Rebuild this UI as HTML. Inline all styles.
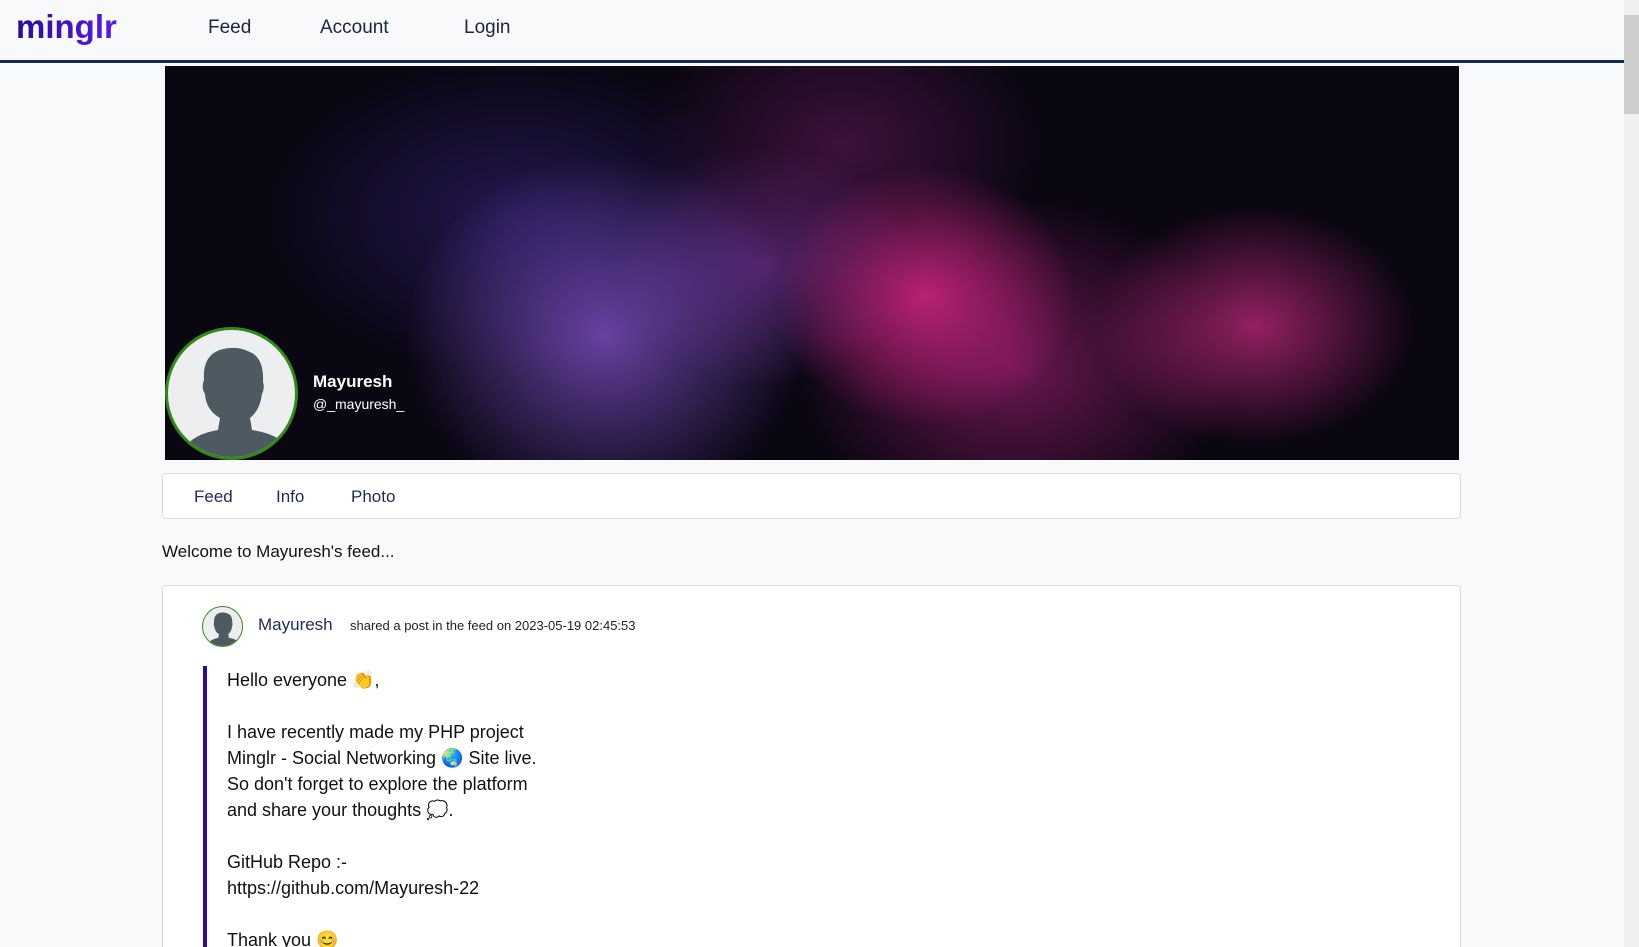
<!DOCTYPE html>
<html style="overflow:hidden;height:947px"><head><meta charset="utf-8"><style>
*{box-sizing:border-box;margin:0;padding:0}
body{width:1639px;height:947px;overflow:hidden;background:#f8f9fb;font-family:"Liberation Sans",sans-serif;color:#111;position:relative}
.nav{position:absolute;left:0;top:0;width:1624px;height:63px;border-bottom:3px solid #16275a;background:#f8f9fb}
.logo{position:absolute;left:16px;top:8px;font-size:33px;font-weight:bold;background:linear-gradient(90deg,#2b0c9a,#5a18f2);-webkit-background-clip:text;color:transparent;letter-spacing:0}
.nav a{position:absolute;top:17px;font-size:19px;color:#1e2340;text-decoration:none}
.sb{position:absolute;right:0;top:0;width:15px;height:947px;background:#f0f0f0}
.sb div{position:absolute;left:0;top:15px;width:15px;height:99px;background:#cdcdcd}
.banner{position:absolute;left:165px;top:66px;width:1294px;height:394px;overflow:hidden;
background:
radial-gradient(ellipse 160px 120px at 1090px 260px,rgba(240,50,150,.6),transparent),
radial-gradient(ellipse 150px 130px at 760px 230px,rgba(230,40,140,.75),transparent),
radial-gradient(ellipse 220px 170px at 850px 300px,rgba(200,40,140,.5),transparent),
radial-gradient(ellipse 200px 180px at 440px 270px,rgba(140,90,220,.7),transparent),
radial-gradient(ellipse 150px 120px at 600px 200px,rgba(140,60,180,.5),transparent),
radial-gradient(ellipse 250px 160px at 350px 150px,rgba(60,40,140,.5),transparent),
radial-gradient(ellipse 200px 150px at 680px 80px,rgba(110,30,100,.5),transparent),
#0a0612}
.av{position:absolute;left:165px;top:327px;width:133px;height:133px;border-radius:50%;border:3px solid #2f8a16;background:#eceef0;overflow:hidden}
.pname{position:absolute;left:313px;top:372px;color:#fff;font-weight:bold;font-size:17px}
.phandle{position:absolute;left:313px;top:396px;color:#fff;font-size:14px}
.tabs{position:absolute;left:162px;top:473px;width:1299px;height:46px;border:1px solid #ddd;border-radius:4px;background:#fff}
.tabs span{position:absolute;top:13px;font-size:17px;color:#1e2a5a}
.welcome{position:absolute;left:162px;top:542px;font-size:17px}
.card{position:absolute;left:162px;top:585px;width:1299px;height:380px;border:1px solid #ddd;border-radius:4px;background:#fff}
.sav{position:absolute;left:202px;top:606px;width:41px;height:41px;border-radius:50%;border:1.5px solid #3a8a1e;background:#eceef0;overflow:hidden}
.post{position:absolute;left:203px;top:666px;width:4px;height:300px;background:#2c0aa0}
.txt{position:absolute;left:227px;top:667px;font-size:18px;line-height:26px;color:#111}
</style></head><body>
<div class="nav"><div class="logo">minglr</div><a style="left:208px">Feed</a><a style="left:320px">Account</a><a style="left:464px">Login</a></div>
<div class="banner"></div>
<div class="av"><svg width="133" height="133" viewBox="0 0 133 133"><path d="M36 50 Q34 20 62 18 Q72 17 82 22 Q96 28 95 52 Q97 58 94 64 Q92 80 82 88 L84 100 Q110 104 118 116 L116 133 L18 133 L16 118 Q26 104 50 100 L52 88 Q38 80 37 64 Q33 58 36 50 Z" fill="#4d5a62"/></svg></div>
<div class="pname">Mayuresh</div><div class="phandle">@_mayuresh_</div>
<div class="tabs"><span style="left:31px">Feed</span><span style="left:113px">Info</span><span style="left:188px">Photo</span></div>
<div class="welcome">Welcome to Mayuresh's feed...</div>
<div class="card"></div>
<div class="sav"><svg width="41" height="41" viewBox="0 0 133 133"><path d="M36 50 Q34 20 62 18 Q72 17 82 22 Q96 28 95 52 Q97 58 94 64 Q92 80 82 88 L84 100 Q110 104 118 116 L116 133 L18 133 L16 118 Q26 104 50 100 L52 88 Q38 80 37 64 Q33 58 36 50 Z" fill="#4d5a62"/></svg></div>
<div style="position:absolute;left:258px;top:615px;font-size:17px;color:#1e2a5a">Mayuresh</div>
<div style="position:absolute;left:350px;top:618px;font-size:13px;color:#222">shared a post in the feed on 2023-05-19 02:45:53</div>
<div class="post"></div>
<div class="txt">Hello everyone 👏,<br><br>I have recently made my PHP project<br>Minglr - Social Networking 🌏 Site live.<br>So don't forget to explore the platform<br>and share your thoughts 💭.<br><br>GitHub Repo :-<br>https://github.com/Mayuresh-22<br><br>Thank you 😊</div>
<div class="sb"><div></div></div>
</body></html>
